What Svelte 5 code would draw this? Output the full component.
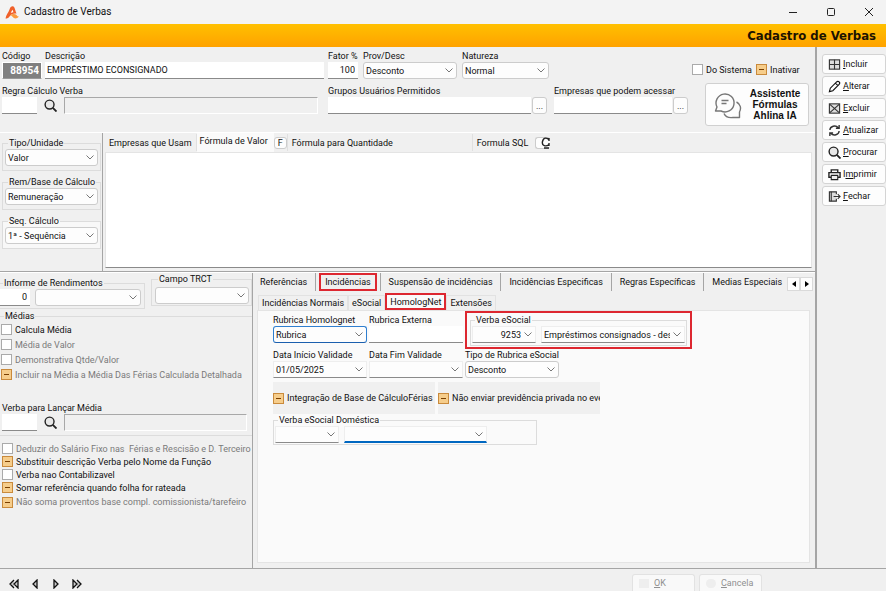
<script lang="ts">
  type Check = { label: string; mixed?: boolean; disabled?: boolean };

  const mediaChecks: Check[] = [
    { label: 'Calcula Média' },
    { label: 'Média de Valor', disabled: true },
    { label: 'Demonstrativa Qtde/Valor', disabled: true },
    { label: 'Incluir na Média a Média Das Férias Calculada Detalhada', mixed: true, disabled: true },
  ];

  const verbaChecks: Check[] = [
    { label: 'Deduzir do Salário Fixo nas  Férias e Rescisão e D. Terceiro', disabled: true },
    { label: 'Substituir descrição Verba pelo Nome da Função', mixed: true },
    { label: 'Verba nao Contabilizavel' },
    { label: 'Somar referência quando folha for rateada', mixed: true },
    { label: 'Não soma proventos base compl. comissionista/tarefeiro', mixed: true, disabled: true },
  ];

  const mainTabs = [
    'Referências',
    'Incidências',
    'Suspensão de incidências',
    'Incidências Especificas',
    'Regras Específicas',
    'Medias Especiais',
  ];
  const subTabs = ['Incidências Normais', 'eSocial', 'HomologNet', 'Extensões'];

  const actions = [
    { icon: 'add', key: 'I', rest: 'ncluir' },
    { icon: 'edit', key: 'A', rest: 'lterar' },
    { icon: 'remove', key: 'E', rest: 'xcluir' },
    { icon: 'refresh', key: 'A', rest: 'tualizar' },
    { icon: 'search', key: 'P', rest: 'rocurar' },
    { icon: 'print', pre: 'I', key: 'm', rest: 'primir' },
    { icon: 'exit', key: 'F', rest: 'echar' },
  ];

  let mainTab = $state('Incidências');
  let subTab = $state('HomologNet');
</script>

{#snippet combo(id: string, value: string, kind = 'round', label = '')}
  <div class="combo {kind}">
    <select {id} aria-label={label || undefined}>
      <option>{value}</option>
    </select>
    <svg viewBox="0 0 8 5" width="8" height="5"><path d="M.5 .5 4 4 7.5 .5" fill="none" stroke="#777" /></svg>
  </div>
{/snippet}

{#snippet check(item: Check)}
  <label class="check" class:dim={item.disabled}>
    <input type="checkbox" indeterminate={item.mixed ?? false} disabled={item.disabled} />
    <span>{item.label}</span>
  </label>
{/snippet}

{#snippet icon(name: string)}
  <svg class="icon" viewBox="0 0 14 14" width="13" height="13" fill="none" stroke="#333" stroke-width="1.2">
    {#if name === 'add'}
      <rect x="1.5" y="2" width="11" height="10" fill="#ddd" />
      <path d="M7 2v10M1.5 7h11" />
    {:else if name === 'edit'}
      <path d="M1.5 12.5 2.500 8.800 9.300 2a1.800 1.800 0 0 1 2.700 2.700L5.200 11.500zM8 3.300l2.700 2.700" stroke="#111" />
    {:else if name === 'remove'}
      <rect x="1.5" y="2" width="11" height="10" fill="#ddd" />
      <path d="m2 2.500 10 9M12 2.500l-10 9" />
    {:else if name === 'refresh'}
      <path d="M2 6.500a5 4.500 0 0 1 9-2.500M12 7.500a5 4.500 0 0 1-9 2.500M12 1v3.500H8.500M2 13V9.500H5.500" stroke-width="1.500" />
    {:else if name === 'search'}
      <circle cx="6" cy="6" r="4.800" stroke="#222" stroke-width="1.500" fill="#e8e8e8" />
      <path d="m9.500 9.500 4 4" stroke="#222" stroke-width="2" />
    {:else if name === 'print'}
      <path d="M3.500 5V2h7v3M3.500 10H1V5h12v5h-2.500" stroke="#222" stroke-width="1.500" />
      <path d="M3.500 8h7v4.500h-7z" fill="#eee" stroke="#222" />
    {:else if name === 'exit'}
      <path d="M9 4.500V2H1.500v10H9V9.500" fill="#ddd" />
      <path d="M3.500 2v10M6 7h7M10.500 4.500 13 7l-2.500 2.500" />
    {/if}
  </svg>
{/snippet}

<div class="window">
  <header class="titlebar">
    <svg viewBox="0 0 14 13" width="14" height="13">
      <path d="M.5 12.500C1 9 3.500 6.500 4.500 3.500 5.200 1 7-.2 8.500.600c1.500 1 1.500 3.900 3 6.900-3-.5-5.500.5-7 3-1 1.500-2 2-4 2z" fill="#f0602a" />
      <path d="M5 9.500c2-2 5-2 6.500-.5.8 1 1.300 1.500 2.500 1.500-2 2.500-5 2.500-6.200.5C7 9.700 6.200 9.200 5 9.500z" fill="#fb9a3e" />
      <path d="M5.800 7q.8-2 1.600-3.200.8 1.500 1 2.400-1.400 0-2.600.8z" fill="#fff" />
    </svg>
    <span class="window-title">Cadastro de Verbas</span>
    <button class="win-btn" aria-label="Minimizar"><svg viewBox="0 0 10 10" width="10" height="10"><path d="M1 5.500h8" /></svg></button>
    <button class="win-btn" aria-label="Maximizar"><svg viewBox="0 0 10 10" width="10" height="10"><rect x="1.500" y="1.500" width="7" height="7" rx="1" /></svg></button>
    <button class="win-btn" aria-label="Fechar janela"><svg viewBox="0 0 10 10" width="10" height="10"><path d="m1 1 8 8M9 1 1 9" /></svg></button>
  </header>

  <h1 class="banner">Cadastro de Verbas</h1>

  <div class="body">
    <main>
      <section class="head">
        <div class="row">
          <div class="field w40">
            <label for="codigo">Código</label>
            <input id="codigo" class="code" value="88954" />
          </div>
          <div class="field grow descricao">
            <label for="descricao">Descrição</label>
            <input id="descricao" value="EMPRÉSTIMO ECONSIGNADO" />
          </div>
          <div class="field w30">
            <label for="fator">Fator %</label>
            <input id="fator" class="num" value="100" />
          </div>
          <div class="field prov">
            <label for="prov">Prov/Desc</label>
            {@render combo('prov', 'Desconto')}
          </div>
          <div class="field natureza">
            <label for="natureza">Natureza</label>
            {@render combo('natureza', 'Normal')}
          </div>
          <div class="flags">
            {@render check({ label: 'Do Sistema' })}
            {@render check({ label: 'Inativar', mixed: true })}
          </div>
        </div>

        <div class="row second">
          <div class="field grow regra">
            <label for="regra">Regra Cálculo Verba</label>
            <div class="lookup">
              <input id="regra" class="short" />
              <button class="plain" aria-label="Procurar regra">{@render icon('search')}</button>
              <input class="readonly" aria-label="Nome da regra" readonly />
            </div>
          </div>
          <div class="field grupos">
            <label for="grupos">Grupos Usuários Permitidos</label>
            <div class="picker"><input id="grupos" /><button class="dots" aria-label="Escolher grupos">...</button></div>
          </div>
          <div class="field empresas">
            <label for="empresas">Empresas que podem acessar</label>
            <div class="picker"><input id="empresas" /><button class="dots" aria-label="Escolher empresas">...</button></div>
          </div>
          <button class="assistant">
            <svg viewBox="0 0 28 28" width="28" height="28" fill="none" stroke="#777" stroke-width="1.400" stroke-linejoin="round">
              <path d="M3 16a9 9 0 1 1 4 4H1.500z" />
              <path d="M7.500 9.500h7M7.500 12.500h5" />
              <path d="M22.500 11c4 2 5 6.500 3 10v5.500h-6.500c-4 .5-7.500-.5-9-4" />
            </svg>
            <span>Assistente<br />Fórmulas<br />Ahlina IA</span>
          </button>
        </div>
      </section>

      <section class="middle">
        <div class="kinds">
          <fieldset>
            <legend>Tipo/Unidade</legend>
            {@render combo('tipo', 'Valor', 'round', 'Tipo/Unidade')}
          </fieldset>
          <fieldset>
            <legend>Rem/Base de Cálculo</legend>
            {@render combo('base', 'Remuneração', 'round', 'Rem/Base de Cálculo')}
          </fieldset>
          <fieldset class="light">
            <legend>Seq. Cálculo</legend>
            {@render combo('seq', '1ª - Sequência', 'round', 'Seq. Cálculo')}
          </fieldset>
        </div>
        <div class="formula">
          <div class="formula-tabs">
            <button class="ftab">Empresas que Usam</button>
            <button class="ftab on">Fórmula de Valor</button>
            <button class="mini">F</button>
            <button class="ftab wide">Fórmula para Quantidade</button>
            <button class="ftab last">Formula SQL</button>
            <button class="mini sql" aria-label="Atualizar SQL">
              <svg viewBox="0 0 9 12" width="9" height="12" fill="none" stroke="#222" stroke-width="1.400"><path d="M8 4V1M8 3C6.500.5 2.500 0 1.500 4.500S5 10 8 7.500M3 11h5M8 6v3" /></svg>
            </button>
          </div>
          <textarea aria-label="Fórmula de Valor"></textarea>
        </div>
      </section>

      <section class="lower">
        <div class="left">
          <div class="pair">
            <fieldset class="informe">
              <legend>Informe de Rendimentos</legend>
              <div class="inline">
                <input class="num w30" aria-label="Código do informe" value="0" />
                {@render combo('informe', '', 'round', 'Informe de Rendimentos')}
              </div>
            </fieldset>
            <fieldset class="trct">
              <legend>Campo TRCT</legend>
              {@render combo('trct', '', 'round', 'Campo TRCT')}
            </fieldset>
          </div>

          <fieldset class="medias">
            <legend>Médias</legend>
            {#each mediaChecks as item}
              {@render check(item)}
            {/each}
            <div class="field lancar">
              <label for="lancar">Verba para Lançar Média</label>
              <div class="lookup">
                <input id="lancar" class="short" />
                <button class="plain" aria-label="Procurar verba">{@render icon('search')}</button>
                <input class="readonly" aria-label="Nome da verba" readonly />
              </div>
            </div>
          </fieldset>

          <div class="options">
            {#each verbaChecks as item}
              {@render check(item)}
            {/each}
          </div>
        </div>

        <div class="right">
          <div class="main-tabs">
            {#each mainTabs as tab}
              <button class="mtab" class:on={tab === mainTab} onclick={() => (mainTab = tab)}><span>{tab}</span></button>
            {/each}
            <div class="scroller">
              <button aria-label="Abas anteriores"><svg viewBox="0 0 4 6" width="4" height="6"><path d="M4 0v6L0 3z" /></svg></button>
              <button aria-label="Próximas abas"><svg viewBox="0 0 4 6" width="4" height="6"><path d="M0 0v6l4-3z" /></svg></button>
            </div>
          </div>
          <div class="sub-tabs">
            {#each subTabs as tab}
              <button class="stab" class:on={tab === subTab} onclick={() => (subTab = tab)}>{tab}</button>
            {/each}
          </div>

          <div class="panel">
            <div class="prow">
              <div class="field w94 top">
                <label for="rubrica">Rubrica Homolognet</label>
                {@render combo('rubrica', 'Rubrica', 'focus')}
              </div>
              <div class="field w94 top">
                <label for="externa">Rubrica Externa</label>
                <input id="externa" />
              </div>
              <div class="marked">
                <fieldset>
                  <legend>Verba eSocial</legend>
                  <div class="inline">
                    {@render combo('esocial', '9253', 'flat code-combo', 'Código verba eSocial')}
                    {@render combo('esocial-nome', 'Empréstimos consignados - desconto', 'flat name-combo', 'Verba eSocial')}
                  </div>
                </fieldset>
              </div>
            </div>
            <div class="prow">
              <div class="field w94">
                <label for="inicio">Data Início Validade</label>
                {@render combo('inicio', '01/05/2025', 'flat')}
              </div>
              <div class="field w94">
                <label for="fim">Data Fim Validade</label>
                {@render combo('fim', '', 'flat')}
              </div>
              <div class="field w94">
                <label for="tipo-rubrica">Tipo de Rubrica eSocial</label>
                {@render combo('tipo-rubrica', 'Desconto')}
              </div>
            </div>
            <div class="prow boxes">
              <div class="box">{@render check({ label: 'Integração de Base de CálculoFérias', mixed: true })}</div>
              <div class="box">{@render check({ label: 'Não enviar previdência privada no evento', mixed: true })}</div>
            </div>
            <fieldset class="domestica">
              <legend>Verba eSocial Doméstica</legend>
              <div class="inline">
                {@render combo('dom', '', 'flat dom-code', 'Código verba doméstica')}
                {@render combo('dom-nome', '', 'flat active', 'Verba eSocial Doméstica')}
              </div>
            </fieldset>
          </div>
        </div>
      </section>
    </main>

    <nav class="actions">
      {#each actions as a}
        <button>{@render icon(a.icon)}<span>{a.pre ?? ''}<u>{a.key}</u>{a.rest}</span></button>
      {/each}
    </nav>
  </div>

  <footer>
    <div class="pager">
      <button aria-label="Primeiro"><svg viewBox="0 0 10 10" width="10" height="10"><path d="M5 1 1 5l4 4M9 1v8L5 5z" /></svg></button>
      <button aria-label="Anterior"><svg viewBox="0 0 10 10" width="10" height="10"><path d="M7 1v8L3 5z" /></svg></button>
      <button aria-label="Próximo"><svg viewBox="0 0 10 10" width="10" height="10"><path d="M3 1v8l4-4z" /></svg></button>
      <button aria-label="Último"><svg viewBox="0 0 10 10" width="10" height="10"><path d="M1 1v8l4-4zM5 1l4 4-4 4" /></svg></button>
    </div>
    <button class="confirm" disabled><i class="sq"></i><span><u>O</u>K</span></button>
    <button class="confirm" disabled><i class="dot"></i><span><u>C</u>ancela</span></button>
  </footer>
</div>

<style>
  :global(body) {
    margin: 0;
    background: #f0f0f0;
  }

  .window {
    min-height: 100vh;
    display: flex;
    flex-direction: column;
    background: #f0f0f0;
    color: #111;
    font: 9px/12px Roboto, 'Liberation Sans', sans-serif;
  }

  .window :is(input, select, button, textarea) {
    box-sizing: border-box;
    min-width: 0;
    margin: 0;
    padding: 0;
    border: 0;
    border-radius: 0;
    background: none;
    color: inherit;
    font: inherit;
    white-space: nowrap;
  }

  svg {
    display: block;
    flex: none;
  }

  /* Title bar */
  .titlebar {
    display: flex;
    align-items: center;
    height: 24px;
    padding-left: 5px;
    background: #f3f3f3;
  }

  .window-title {
    flex: 1;
    padding-left: 5px;
    font-size: 10px;
  }

  .window .win-btn {
    display: grid;
    place-items: center;
    width: 38px;
    height: 24px;
  }

  .win-btn:last-child {
    margin-right: -2px;
  }

  .win-btn svg {
    fill: none;
    stroke: #222;
  }

  .banner {
    margin: 0;
    padding-right: 10px;
    background: linear-gradient(#ffc000, #ffa200);
    color: #1c1300;
    font: bold 13px/24px 'DejaVu Sans Condensed', 'Noto Sans', sans-serif;
    height: 23px;
    text-align: right;
  }

  .body {
    flex: 1;
    display: flex;
  }

  main {
    flex: 1;
    min-width: 0;
    display: flex;
    flex-direction: column;
    border-right: 2px solid #a5a5a5;
  }

  /* Fields */
  .field {
    display: flex;
    flex-direction: column;
  }

  .field > label {
    white-space: nowrap;
  }

  .grow {
    flex: 1;
    min-width: 0;
  }

  .window input:not([type='checkbox']) {
    height: 17px;
    padding: 0 2px;
    border-bottom: 1px solid #8a8a8a;
    background: #fff;
  }

  .window input.readonly {
    flex: 1;
    border: 1px solid #a8a8a8;
    border-right-color: #fff;
    border-bottom-color: #fff;
    background: #f0f0f0;
  }

  .window input.code {
    border: 1px solid #fff;
    border-bottom-color: #999;
    background: #808080;
    color: #fff;
    font-weight: bold;
    font-size: 10px;
    text-align: right;
  }

  .window input.num {
    padding-right: 3px;
    text-align: right;
  }

  .w30 {
    width: 30px;
  }

  .w40 {
    width: 40px;
  }

  .w94 {
    width: 94px;
  }

  .combo {
    display: grid;
    align-items: center;
  }

  .combo > * {
    grid-area: 1 / 1;
  }

  .window .combo select {
    width: 100%;
    height: 17px;
    padding: 0 14px 0 2px;
    border: 1px solid #ccc;
    border-radius: 3px;
    background: #fdfdfd;
    appearance: none;
    text-overflow: clip;
  }

  .combo svg {
    justify-self: end;
    margin-right: 4px;
    pointer-events: none;
  }

  .window .combo.flat select {
    border-color: #eee;
    border-bottom-color: #8a8a8a;
    border-radius: 0;
  }

  .window .combo.focus select {
    border-color: #2f7fd0;
    border-bottom-color: #1b5fae;
  }

  .window .combo.active select {
    border-bottom: 2px solid #0067c0;
  }

  fieldset {
    min-width: 0;
    margin: 0;
    padding: 0 2px 4px;
    border: 1px solid #dcdcdc;
  }

  legend {
    margin-left: 3px;
    padding: 0 1px;
    white-space: nowrap;
  }

  .inline {
    display: flex;
  }

  .check {
    display: flex;
    align-items: center;
    gap: 3px;
    white-space: pre;
  }

  .check.dim {
    color: #7a7a7a;
  }

  .window .check input {
    flex: none;
    display: grid;
    place-items: center;
    width: 11px;
    height: 11px;
    border: 1px solid #aaa;
    background: #fff;
    appearance: none;
  }

  .window .check input:indeterminate {
    border-color: #c98a3c;
    background: #f6cd8b;
  }

  .check input:indeterminate::before {
    content: '';
    width: 5px;
    height: 1px;
    background: #7a3f00;
  }

  /* Header form */
  .head {
    padding: 3px 6px 6px 2px;
    border-bottom: 1px solid #fff;
  }

  .row {
    display: flex;
  }

  .descricao {
    margin: 0 4px 0 3px;
  }

  .prov {
    width: 94px;
    margin-left: 5px;
  }

  .natureza {
    width: 87px;
    margin-left: 5px;
  }

  .flags {
    display: flex;
    align-items: center;
    gap: 4px;
    width: 117px;
    padding-top: 10px;
    margin-left: 143px;
  }

  .second {
    padding-top: 4px;
  }

  .regra {
    padding: 3px 10px 0 0;
  }

  .second .field {
    padding-top: 2px;
  }

  .lookup {
    display: flex;
  }

  .window .lookup .short {
    width: 35px;
  }

  .window .plain {
    display: grid;
    place-items: center;
    width: 27px;
  }

  .grupos {
    width: 219px;
  }

  .empresas {
    width: 134px;
    margin-left: 7px;
  }

  .picker {
    display: flex;
    gap: 1px;
  }

  .picker input {
    flex: 1;
  }

  .window .dots {
    width: 15px;
    height: 17px;
    border: 1px solid #ccc;
    border-radius: 3px;
    background: #fdfdfd;
  }

  .window .assistant {
    display: flex;
    align-items: center;
    justify-content: center;
    gap: 8px;
    width: 104px;
    height: 43px;
    margin-left: 17px;
    border: 1px solid #d0d0d0;
    border-radius: 3px;
    background: #fdfdfd;
    font: bold 10px/11px 'Liberation Sans', sans-serif;
  }

  /* Formula area */
  .middle {
    display: flex;
    height: 138px;
    border-bottom: 1px solid #a5a5a5;
  }

  .kinds {
    box-sizing: border-box;
    width: 103px;
    padding: 4px 1px 0 2px;
    border-right: 1px solid #a5a5a5;
  }

  .kinds fieldset {
    margin-bottom: 5px;
  }

  .light {
    background: #f8f8f8;
  }

  .formula {
    flex: 1;
    min-width: 0;
    display: flex;
    flex-direction: column;
    padding: 0 3px 3px 2px;
  }

  .formula-tabs {
    display: flex;
    align-items: center;
    height: 19px;
  }

  .window .ftab {
    height: 17px;
    padding: 0 4px;
    border-right: 1px solid #e0e0e0;
    text-align: left;
  }

  .window .ftab.on {
    height: 19px;
    padding: 0 6px 3px 3px;
    border-right: 0;
    background: #fafafa;
  }

  .window .ftab.wide {
    width: 186px;
    border-left: 1px solid #e0e0e0;
  }

  .window .ftab.last {
    border-right: 0;
  }

  .window .mini {
    width: 13px;
    height: 12px;
    border: 1px solid #ccc;
    border-radius: 3px;
    background: #fdfdfd;
    line-height: 10px;
  }

  .window .sql {
    display: flex;
    justify-content: flex-end;
    align-items: center;
    width: 15px;
    margin-left: 3px;
    border-right: 0;
  }

  .window textarea {
    flex: 1;
    border: 1px solid #e4e4e4;
    border-bottom-color: #8a8a8a;
    background: #fff;
    resize: none;
  }

  /* Lower left */
  .lower {
    flex: 1;
    display: flex;
    border-top: 1px solid #fff;
  }

  .left {
    box-sizing: border-box;
    width: 253px;
    border-right: 1px solid #a5a5a5;
  }

  .pair {
    display: flex;
    align-items: flex-start;
    gap: 6px;
  }

  .informe {
    width: 141px;
    margin-top: 4px;
    padding: 0 3px 2px 0;
    border-left: 0;
  }

  .informe .inline {
    gap: 5px;
  }

  .informe .combo {
    flex: 1;
  }

  .trct {
    flex: 1;
    padding: 2px 2px 1px 3px;
  }

  .medias {
    padding: 0 0 0 1px;
    border-width: 1px 0;
    margin-top: 1px;
  }

  .medias .check {
    height: 15px;
  }

  .lancar {
    padding: 20px 5px 4px 1px;
  }

  .options {
    padding: 6px 0 0 2px;
  }

  .options .check {
    height: 13px;
  }

  .options .check:last-child {
    height: 16px;
  }

  /* Lower right */
  .right {
    flex: 1;
    min-width: 0;
    display: flex;
    flex-direction: column;
    padding: 0 5px 5px 4px;
  }

  .main-tabs {
    display: flex;
    align-items: stretch;
    height: 18px;
  }

  .window .mtab {
    padding: 0 8px;
    border-right: 1px solid #a5a5a5;
  }

  .window .mtab:first-child {
    padding-left: 3px;
  }

  .window .mtab:nth-last-child(2) {
    padding-right: 5px;
    border-right: 0;
  }

  .window .mtab.on {
    padding: 0 3px;
  }

  .mtab.on span {
    display: block;
    padding: 1px 4px;
    border: 2px solid #dd2730;
  }

  .scroller {
    display: flex;
    align-items: flex-end;
    margin: 0 -3px 0 auto;
  }

  .window .scroller button {
    display: grid;
    place-items: center;
    width: 13px;
    height: 14px;
    border: 1px solid #dadada;
    background: #fdfdfd;
  }

  .sub-tabs {
    display: flex;
    align-items: flex-end;
    height: 19px;
    padding-left: 1px;
  }

  .window .stab {
    height: 15px;
    padding: 0 3px;
    border: 1px solid #e2e2e2;
    border-bottom: 0;
  }

  .window .stab.on {
    height: 17px;
    border: 2px solid #dd2730;
    background: #fafafa;
  }

  .panel {
    flex: 1;
    padding-left: 15px;
    border: 1px solid #e4e4e4;
    background: #fafafa;
  }

  .prow {
    display: flex;
    gap: 2px;
  }

  .top {
    padding-top: 3px;
  }

  .marked {
    box-sizing: border-box;
    width: 227px;
    padding: 1px 3px;
    border: 2px solid #dd2730;
  }

  .marked fieldset {
    padding: 0 1px 2px;
  }

  .marked .inline {
    gap: 5px;
  }

  .code-combo {
    width: 64px;
  }

  .window .combo.code-combo select {
    text-align-last: right;
  }

  .name-combo {
    flex: 1;
    min-width: 0;
  }

  .boxes {
    gap: 3px;
    padding-top: 4px;
  }

  .box {
    display: flex;
    align-items: center;
    width: 162px;
    height: 32px;
    overflow: hidden;
    background: #f0f0f0;
  }

  .domestica {
    width: 260px;
    padding: 0 1px 1px;
  }

  .domestica .inline {
    gap: 5px;
  }

  .dom-code {
    width: 64px;
  }

  .active {
    width: 143px;
  }

  /* Action column */
  .actions {
    display: flex;
    flex-direction: column;
    gap: 2px;
    width: 64px;
    padding: 7px 0 0 5px;
  }

  .window .actions button {
    display: flex;
    align-items: center;
    gap: 2px;
    height: 20px;
    padding-left: 5px;
    border: 1px solid #d4d4d4;
    border-radius: 3px;
    background: #fdfdfd;
  }

  /* Footer */
  footer {
    display: flex;
    align-items: flex-end;
    gap: 4px;
    height: 22px;
    padding-right: 124px;
    border-top: 1px solid #a5a5a5;
    overflow: hidden;
  }

  .pager {
    flex: 1;
    display: flex;
    gap: 11px;
    padding: 0 9px 2px;
  }

  .pager svg {
    fill: #ccc;
    stroke: #111;
    stroke-width: 1.3;
  }

  .window .confirm {
    display: flex;
    align-items: center;
    gap: 5px;
    width: 63px;
    height: 17px;
    padding-left: 6px;
    border: 1px solid #e2e2e2;
    border-bottom: 0;
    border-radius: 3px 3px 0 0;
    background: #f9f9f9;
    color: #909090;
  }

  .sq,
  .dot {
    width: 10px;
    height: 9px;
    background: #eee;
  }

  .dot {
    border-radius: 5px;
  }
</style>
